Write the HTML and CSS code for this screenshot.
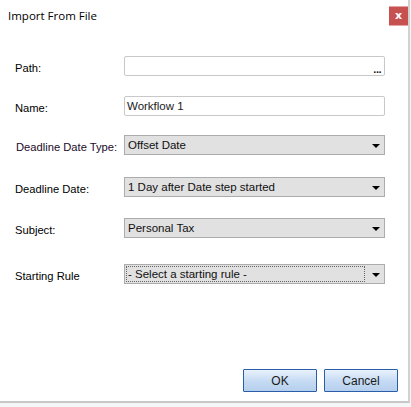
FILE: index.html
```html
<!DOCTYPE html>
<html>
<head>
<meta charset="utf-8">
<link rel="stylesheet" href="styles.css">
</head>
<body>
<div class="dialog">
  <div class="titlebar">
    <span class="title">Import From File</span>
    <span class="close">x</span>
  </div>
  <div class="form">
    <div class="row r-path">
      <span class="label">Path:</span>
      <div class="input path"><span class="dots">...</span></div>
    </div>
    <div class="row r-name">
      <span class="label">Name:</span>
      <div class="input">Workflow 1</div>
    </div>
    <div class="row r-type">
      <span class="label lbl-type">Deadline Date Type:</span>
      <div class="select"><span class="value">Offset Date</span><span class="arrow"></span></div>
    </div>
    <div class="row r-date">
      <span class="label">Deadline Date:</span>
      <div class="select"><span class="value">1 Day after Date step started</span><span class="arrow"></span></div>
    </div>
    <div class="row r-subject">
      <span class="label">Subject:</span>
      <div class="select"><span class="value">Personal Tax</span><span class="arrow"></span></div>
    </div>
    <div class="row r-rule">
      <span class="label">Starting Rule</span>
      <div class="select"><span class="value focus">- Select a starting rule -</span><span class="arrow"></span></div>
    </div>
  </div>
  <div class="buttons">
    <button class="btn">OK</button>
    <button class="btn">Cancel</button>
  </div>
</div>
</body>
</html>
```
FILE: styles.css
```css
html, body {
  margin: 0;
  padding: 0;
}
body {
  width: 411px;
  height: 407px;
  background: #f4f6f8;
  font-family: "Liberation Sans", Arial, sans-serif;
  font-size: 11px;
  color: #000;
  overflow: hidden;
}
.dialog {
  width: 410px;
  height: 403px;
  background: #fff;
  border-right: 2px solid #d2d2d2;
  border-bottom: 2px solid #c8c8c8;
  display: flex;
  flex-direction: column;
  box-sizing: border-box;
}
.titlebar {
  height: 33px;
  display: flex;
  align-items: flex-start;
  justify-content: space-between;
}
.title {
  font-family: "Open Sans", "Noto Sans", sans-serif;
  font-size: 11.5px;
  color: #000;
  margin: 8px 0 0 8px;
}
.close {
  width: 19px;
  height: 20px;
  margin-top: 6px;
  background: #c75050;
  color: #fff;
  font-weight: bold;
  font-size: 11px;
  font-family: "DejaVu Sans", sans-serif;
  display: flex;
  align-items: center;
  justify-content: center;
  box-sizing: border-box;
  border-top: 1px solid #e6a3a3;
  border-bottom: 1px solid #e6a3a3;
  line-height: 1;
  padding-bottom: 2px;
}
.form {
  display: flex;
  flex-direction: column;
  padding-left: 15px;
}
.row {
  display: flex;
  align-items: center;
  height: 20px;
}
.r-path { margin-top: 23px; }
.r-name { margin-top: 20px; }
.r-type { margin-top: 19px; }
.r-date { margin-top: 22px; }
.r-subject { margin-top: 21px; }
.r-rule { margin-top: 26px; }
.label {
  width: 109px;
  flex: none;
  position: relative;
  top: 2px;
  color: #000;
  font-size: 11.2px;
}
.lbl-type { color: #1a0a2a; left: 1px; }
.input {
  width: 261px;
  height: 20px;
  box-sizing: border-box;
  border: 1px solid #c8c8c8;
  border-radius: 2px;
  background: #fff;
  padding-left: 2px;
  display: flex;
  align-items: center;
  color: #1a1a1a;
  font-size: 11.5px;
}
.path {
  justify-content: flex-end;
  padding-right: 3px;
}
.dots {
  font-weight: bold;
  font-size: 11px;
  line-height: 1;
  position: relative;
  top: 3px;
  letter-spacing: -0.5px;
}
.select {
  width: 261px;
  height: 20px;
  box-sizing: border-box;
  border: 1px solid #acacac;
  background: #e1e1e1;
  display: flex;
  align-items: center;
  justify-content: space-between;
  padding: 0 4px 0 1px;
}
.value {
  padding: 0 0 0 2px;
  color: #101010;
  line-height: 16px;
  height: 16px;
  box-sizing: border-box;
  font-size: 11.5px;
}
.value.focus {
  flex: 1;
  border: 1px dotted #666;
  margin-right: 7px;
  line-height: 14px;
  padding-left: 1px;
}
.arrow {
  width: 0;
  height: 0;
  border-left: 4px solid transparent;
  border-right: 4px solid transparent;
  border-top: 4px solid #000;
  margin-top: 1px;
}
.buttons {
  margin-top: auto;
  display: flex;
  justify-content: flex-end;
  gap: 7px;
  padding: 0 10px 9px 0;
}
.btn {
  width: 74px;
  height: 23px;
  border: 1px solid #2b5ea8;
  border-radius: 1px;
  background: linear-gradient(#eaf2fc, #c7dcf4 50%, #b6cfee);
  font-family: "Liberation Sans", Arial, sans-serif;
  font-size: 12px;
  color: #1a1a1a;
  padding: 0;
}
```
